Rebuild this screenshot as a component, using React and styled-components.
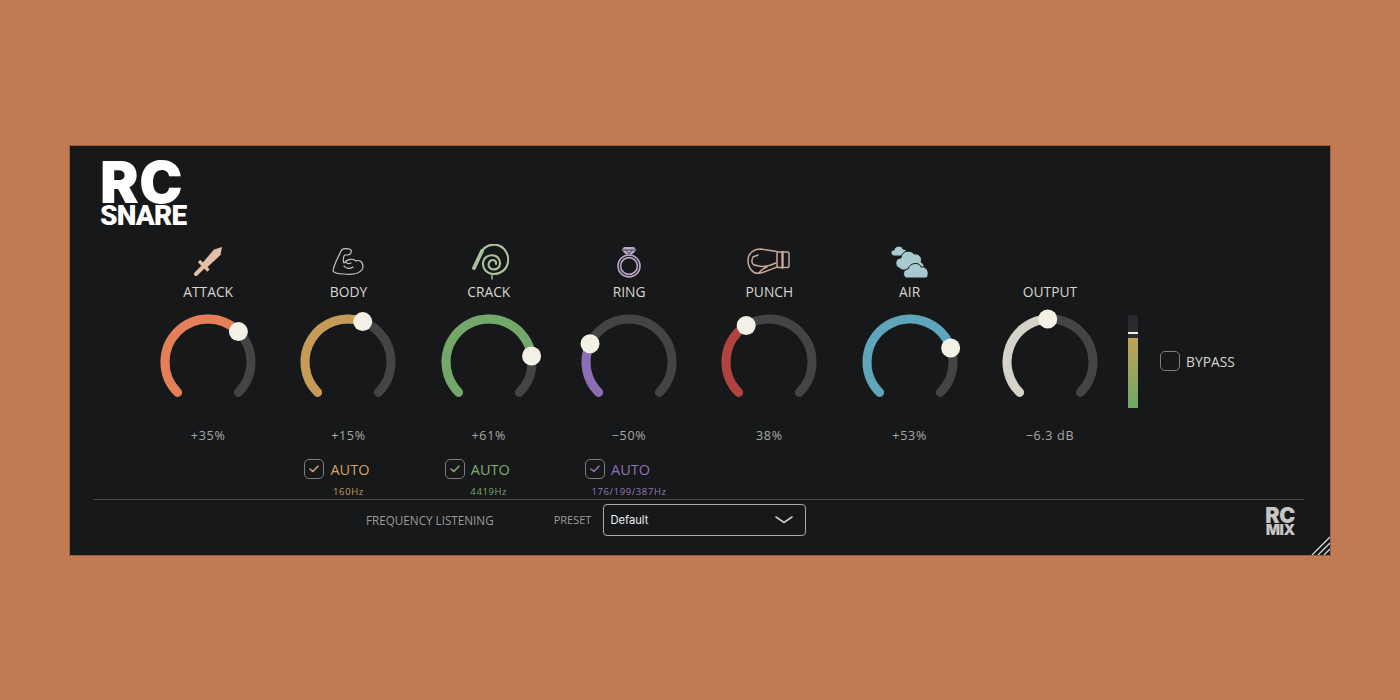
import React from 'react';
import styled, { createGlobalStyle } from 'styled-components';

const GlobalStyle = createGlobalStyle`
	html, body, #root {
		margin: 0;
		height: 100%;
	}
	body {
		background: #c27a52;
		font-family: 'Open Sans', 'Noto Sans', sans-serif;
	}
`;

const Page = styled.div`
	height: 700px;
	display: flex;
	align-items: flex-start;
	justify-content: center;
	padding-top: 146px;
	box-sizing: border-box;
`;

const Panel = styled.div`
	position: relative;
	width: 1260px;
	height: 409px;
	background: #17181a;
	box-shadow: 0 0 0 1px rgba(70, 35, 15, 0.3);
`;

const LogoBlock = styled.div`
	height: 99px;
	padding: 15px 0 0 30px;
	box-sizing: border-box;
	color: #fff;
	font-family: Inter, Roboto, sans-serif;
	font-weight: 900;
`;

const LogoTop = styled.div`
	font-size: 58px;
	line-height: 43px;
	letter-spacing: 0.5px;
`;

const LogoBottom = styled.div`
	font-family: Roboto, Inter, sans-serif;
	font-size: 28px;
	line-height: 23px;
	letter-spacing: -0.8px;
`;

const KnobRow = styled.div`
	display: flex;
	align-items: flex-start;
	height: 254px;
	padding-left: 68px;
`;

const KnobColumn = styled.div`
	width: 140.3px;
	flex: none;
	display: flex;
	flex-direction: column;
	align-items: center;
`;

const IconBox = styled.div`
	height: 34px;
	display: flex;
	align-items: center;
	justify-content: center;
`;

const KnobLabel = styled.div`
	height: 26px;
	line-height: 26px;
	font-size: 13.8px;
	color: #d8d6d0;
`;

const KnobSvg = styled.svg`
	display: block;
	width: 110px;
	height: 110px;
	margin-top: 2px;
`;

const ValueText = styled.div`
	margin-top: 9px;
	height: 20px;
	line-height: 20px;
	font-size: 12.5px;
	letter-spacing: 0.7px;
	color: #a9a9a6;
`;

const AutoRow = styled.div`
	margin: 13px 23px 0 0;
	height: 20px;
	display: flex;
	align-items: center;
	gap: 6px;
	font-size: 14.5px;
	color: ${(p) => p.$color};
`;

const CheckBox = styled.div`
	width: 20px;
	height: 20px;
	box-sizing: border-box;
	border: 1.5px solid #7d7d7b;
	border-radius: 5px;
	display: flex;
	align-items: center;
	justify-content: center;
`;

const HzText = styled.div`
	margin-top: 7px;
	line-height: 12px;
	font-size: 9.5px;
	letter-spacing: 0.6px;
	white-space: nowrap;
	color: ${(p) => p.$color};
`;

const Meter = styled.div`
	position: relative;
	flex: none;
	width: 10px;
	height: 93px;
	margin: 70px 0 0 8px;
	background: #2a2b2e;
	border-radius: 2px 2px 0 0;
	display: flex;
	align-items: flex-end;
`;

const MeterFill = styled.div`
	width: 100%;
	background: linear-gradient(#bfa356, #6fa767);
`;

const MeterMark = styled.div`
	position: absolute;
	left: 0;
	right: 0;
	top: 17px;
	height: 1.5px;
	background: #eeeeea;
`;

const BypassRow = styled.div`
	margin: 106px 0 0 22px;
	height: 20px;
	display: flex;
	align-items: center;
	gap: 6px;
	font-size: 13.8px;
	color: #d8d6d0;
`;

const Divider = styled.div`
	height: 1px;
	margin: 0 26px 0 24px;
	background: #4a4b4c;
`;

const Footer = styled.div`
	display: flex;
	align-items: flex-start;
	height: 55px;
	padding: 4px 24px 0 296px;
`;

const FooterText = styled.div`
	height: 32px;
	line-height: 32px;
	font-size: ${(p) => p.$size}px;
	color: #9b9b98;
	margin-right: ${(p) => p.$gap}px;
`;

const Select = styled.div`
	width: 203px;
	height: 32px;
	box-sizing: border-box;
	border: 1.2px solid #a8a8a6;
	border-radius: 4px;
	padding: 0 12px 0 6px;
	display: flex;
	align-items: center;
	justify-content: space-between;
	font-family: Inter, sans-serif;
	font-size: 11.2px;
	color: #efefec;
`;

const MiniLogo = styled.div`
	margin: 3px 11px 0 auto;
	color: #c6c6c4;
	font-family: Inter, Roboto, sans-serif;
	font-weight: 900;
	text-align: center;
`;

const MiniTop = styled.div`
	font-size: 21.5px;
	line-height: 17px;
	letter-spacing: -0.4px;
`;

const MiniBottom = styled.div`
	font-size: 15px;
	line-height: 12px;
	letter-spacing: -0.5px;
`;

const Grip = styled.svg`
	position: absolute;
	right: 0;
	bottom: 0;
	width: 19px;
	height: 19px;
`;

const CX = 55;
const CY = 55;
const R = 43;

const polar = (deg) => {
	const a = (deg * Math.PI) / 180;
	return [CX + R * Math.sin(a), CY - R * Math.cos(a)];
};

const arc = (from, to) => {
	const [x1, y1] = polar(from);
	const [x2, y2] = polar(to);
	const large = to - from > 180 ? 1 : 0;
	return `M${x1} ${y1} A${R} ${R} 0 ${large} 1 ${x2} ${y2}`;
};

const Knob = ({ angle, color }) => {
	const [tx, ty] = polar(angle);
	return (
		<KnobSvg viewBox='0 0 110 110'>
			<path d={arc(-135, 135)} fill='none' stroke='#434446' strokeWidth='9' strokeLinecap='round' />
			<path d={arc(-135, angle)} fill='none' stroke={color} strokeWidth='9' strokeLinecap='round' />
			<circle cx={tx} cy={ty} r='9.5' fill='#f3f0e6' />
		</KnobSvg>
	);
};

const SwordIcon = () => (
	<svg width='30' height='30' viewBox='0 0 30 30'>
		<path d='M29 0 L27.5 8 L13.5 21 L9 16.5 L21 2.5 Z' fill='#e6bda6' />
		<path d='M6 14 L15.5 23.5' stroke='#e6bda6' strokeWidth='3.2' />
		<path d='M10 20 L3 27' stroke='#e6bda6' strokeWidth='4' strokeLinecap='round' />
	</svg>
);

const BicepIcon = () => (
	<svg width='32' height='28' viewBox='0 0 32 28' fill='none' stroke='#c8c6bf' strokeWidth='1.2' strokeLinejoin='round' strokeLinecap='round'>
		<path d='M1 23 C2 16 6 10 9 3 C10 0 17 0 19 2 C20 5 18 7 15 7 L12.5 7 C11 10 11 13 12 15 C15 11 21 10 24 13 C29 11 32 16 30.5 21 C27 26 19 27 12 26 C8 26 3 26 1 23 Z' />
		<path d='M12 18 C14 21 18 21 21 19 M14 14 C15 16 17 16 19 15' />
	</svg>
);

const WhipIcon = () => (
	<svg width='40' height='36' viewBox='-2 1 40 36' fill='none' stroke='#a9c29b' strokeLinecap='round'>
		<path d='M3 25 L11 8' strokeWidth='3.8' />
		<path d='M11 8 C15 2 23 0 29 3 C35 6 38 13 37 19 C36 26 30 31 23 31 C16 31 11.5 26 12 20 C12.5 14 18 11.5 23 12.5 C28 13.5 30 19 28.5 23 C26.5 27 21 27.5 18.5 24.5 C16.5 21.5 18 17 22 17 C24 17 25.5 19 25 21' strokeWidth='2.1' />
		<path d='M21 31 L21 36' strokeWidth='1.4' />
	</svg>
);

const RingIcon = () => (
	<svg width='28' height='34' viewBox='0 0 28 34' fill='none' stroke='#b8a8c8'>
		<circle cx='14' cy='21' r='11' strokeWidth='1.6' />
		<circle cx='14' cy='21' r='8.4' strokeWidth='1.6' />
		<path d='M9 2 H19 L21.5 5 L17 9.5 H11 L6.5 5 Z' fill='#b8a8c8' stroke='none' />
		<path d='M6.5 5 H21.5 M11 5 L14 9 L17 5' stroke='#17181a' strokeWidth='0.7' />
	</svg>
);

const GloveIcon = () => (
	<svg width='46' height='28' viewBox='0 0 46 28' fill='none' stroke='#c9a79b' strokeWidth='1.5' strokeLinejoin='round' strokeLinecap='round'>
		<rect x='31' y='4' width='12' height='15.5' rx='1.5' />
		<path d='M36.5 4 V19.5' strokeWidth='2.4' />
		<path d='M31 3.5 L15 1 C7 1 2 6 2 12 C2 20 7 26 13 25.3 C18 24.5 25 21.5 31 19' />
		<path d='M7 9 C5 13 6 18 10 17 M7 9 L12 7 M8 17 C14 19 22 19 30 15 M13 25 C15 22 18 20 21 19' />
	</svg>
);

const CloudIcon = () => (
	<svg width='40' height='34' viewBox='0 0 40 34' fill='#a7c9d0' stroke='#17181a' strokeWidth='1'>
		<path d='M4 11 C0 10 0 5 4 5 C5 0 12 0 13 4 C17 4 18 9 15 11 Z' />
		<path d='M9 23 C4 21 5 13 11 13 C11 6 21 4 24 9 C29 8 33 13 31 17 C35 19 35 24 32 25 L12 25 Z' />
		<path d='M16 33 C12 31 13 24 18 24 C20 17 30 17 31 22 C36 21 39 26 38 30 C38 32 37 33 35 33 Z' />
	</svg>
);

const Check = ({ color }) => (
	<svg width='10' height='8' viewBox='0 0 10 8' fill='none' stroke={color} strokeWidth='1.6' strokeLinecap='round' strokeLinejoin='round'>
		<path d='M1 4 L3.8 6.5 L9 1.2' />
	</svg>
);

const knobs = [
	{ label: 'ATTACK', Icon: SwordIcon, angle: 45, color: '#e57f58', value: '+35%' },
	{ label: 'BODY', Icon: BicepIcon, angle: 20, color: '#c69b56', value: '+15%', hz: '160Hz', auto: '#d0a463', hzColor: '#c09c62' },
	{ label: 'CRACK', Icon: WhipIcon, angle: 82, color: '#74a76a', value: '+61%', hz: '4419Hz', auto: '#80ad72', hzColor: '#7ca670' },
	{ label: 'RING', Icon: RingIcon, angle: -65, color: '#8d6db3', value: '−50%', hz: '176/199/387Hz', auto: '#9173b6', hzColor: '#9478b8' },
	{ label: 'PUNCH', Icon: GloveIcon, angle: -32, color: '#b2423f', value: '38%' },
	{ label: 'AIR', Icon: CloudIcon, angle: 71, color: '#5ea6bb', value: '+53%' },
	{ label: 'OUTPUT', angle: -3, color: '#d5d2c8', value: '−6.3 dB' },
];

export default function App() {
	return (
		<Page>
			<GlobalStyle />
			<Panel>
				<LogoBlock>
					<LogoTop>RC</LogoTop>
					<LogoBottom>SNARE</LogoBottom>
				</LogoBlock>
				<KnobRow>
					{knobs.map(({ label, Icon, angle, color, value, hz, auto, hzColor }) => (
						<KnobColumn key={label}>
							<IconBox>{Icon && <Icon />}</IconBox>
							<KnobLabel>{label}</KnobLabel>
							<Knob angle={angle} color={color} />
							<ValueText>{value}</ValueText>
							{auto && (
								<>
									<AutoRow $color={auto}>
										<CheckBox>
											<Check color={auto} />
										</CheckBox>
										AUTO
									</AutoRow>
									<HzText $color={hzColor}>{hz}</HzText>
								</>
							)}
						</KnobColumn>
					))}
					<Meter>
						<MeterMark />
						<MeterFill style={{ height: '75%' }} />
					</Meter>
					<BypassRow>
						<CheckBox />
						BYPASS
					</BypassRow>
				</KnobRow>
				<Divider />
				<Footer>
					<FooterText $size={11.7} $gap={60}>FREQUENCY LISTENING</FooterText>
					<FooterText $size={11} $gap={12}>PRESET</FooterText>
					<Select>
						Default
						<svg width='18' height='8' viewBox='0 0 18 8' fill='none' stroke='#c8c8c6' strokeWidth='1.6' strokeLinecap='round' strokeLinejoin='round'>
							<path d='M1 1 L9 6.5 L17 1' />
						</svg>
					</Select>
					<MiniLogo>
						<MiniTop>RC</MiniTop>
						<MiniBottom>MIX</MiniBottom>
					</MiniLogo>
				</Footer>
				<Grip viewBox='0 0 19 19' stroke='#d8d8d4' strokeWidth='1.3'>
					<path d='M1 19 L19 1 M7 19 L19 7 M13 19 L19 13' />
				</Grip>
			</Panel>
		</Page>
	);
}
